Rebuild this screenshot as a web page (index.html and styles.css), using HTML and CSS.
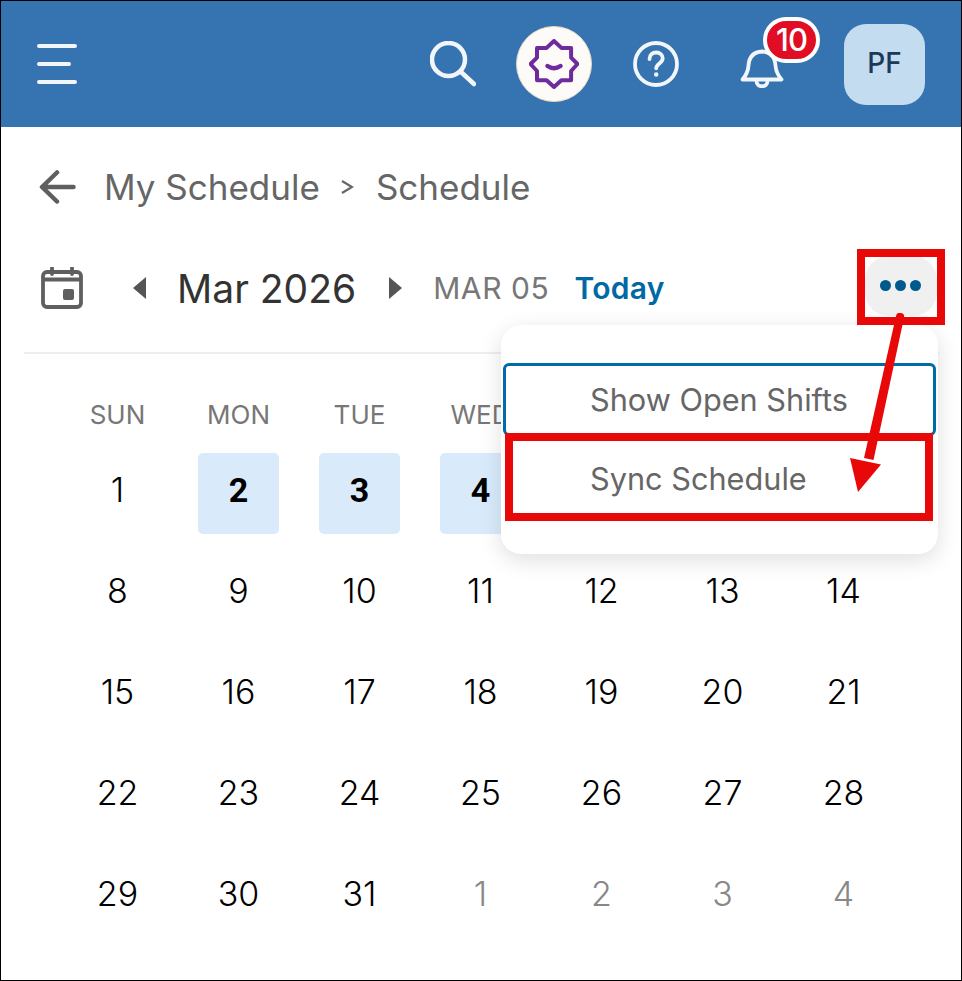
FILE: index.html
```html
<!DOCTYPE html>
<html lang="en">
<head>
<meta charset="UTF-8">
<meta name="viewport" content="width=device-width, initial-scale=1.0">
<title>My Schedule</title>
<link rel="stylesheet" href="styles.css">
</head>
<body>
<div class="screen">

  <!-- top bar -->
  <header class="topbar">
    <div class="burger"><span></span><span class="short"></span><span></span></div>
    <div class="top-actions">
      <svg class="ico-search" width="46" height="46" viewBox="0 0 46 46" fill="none" stroke="#f2f6fa" stroke-width="4.5" stroke-linecap="round"><circle cx="18.5" cy="18.5" r="16.5"/><path d="M31 31l13 12"/></svg>
      <div class="logo-round">
        <svg width="50" height="50" viewBox="0 0 50 50" fill="none" stroke="#6f2a9c" stroke-width="4" stroke-linejoin="round" stroke-linecap="round"><path d="M25 2l7.400 6.900h9.700v9.700l6.400 6.400-6.400 7v9.300h-9.700L25 48l-7.400-6.700H8V32l-6.500-7L8 18.600V8.900h9.600z"/><path d="M18.500 27c4.500 3 8.500 3 13 0" stroke-width="4.500"/></svg>
      </div>
      <svg class="ico-help" width="46" height="46" viewBox="0 0 46 46" fill="none" stroke="#f2f6fa" stroke-width="3.800" stroke-linecap="round"><circle cx="23" cy="23" r="21"/><path d="M16.500 18c0-4 3-6.500 6.700-6.500s6.500 2.500 6.500 5.800c0 5-6.500 5.200-6.500 10"/><circle cx="23.200" cy="33.500" r="1.500" fill="#f2f6fa" stroke-width="1.500"/></svg>
      <div class="bell-wrap">
        <svg width="46" height="44" viewBox="0 0 46 44" fill="none" stroke="#f2f6fa" stroke-width="3.800" stroke-linejoin="round" stroke-linecap="round"><path d="M2.500 35.500c3.500-4 5.500-7 6-14 .6-8 5-13.500 13.500-14 8.500.5 13 6 13.500 14 .5 7 2.500 10 6 14z"/><path d="M16.500 37c0 7 11 7 11 0"/></svg>
        <span class="badge">10</span>
      </div>
      <div class="avatar">PF</div>
    </div>
  </header>

  <!-- breadcrumb -->
  <nav class="crumbs">
    <svg width="38" height="36" viewBox="0 0 38 36" fill="none" stroke="#5f5f5f" stroke-width="4.500" stroke-linecap="round" stroke-linejoin="round"><path d="M18 3.500L3 18l15 14.500M3.500 18h31"/></svg>
    <span class="crumb-text">My Schedule</span>
    <svg class="crumb-sep" width="14" height="16" viewBox="0 0 14 16" fill="none" stroke="#666" stroke-width="2.200"><path d="M2 2l10 6-10 6"/></svg>
    <span class="crumb-text">Schedule</span>
  </nav>

  <!-- month row -->
  <div class="month-row">
    <svg class="cal-ico" width="42" height="42" viewBox="0 0 42 42" fill="none" stroke="#5f5f5f" stroke-width="3.800"><rect x="2" y="5" width="38" height="35" rx="4"/><path d="M2 12.500h38"/><path d="M11 1v6M31 1v6" stroke-linecap="round"/><rect x="22" y="22" width="11" height="11" rx="2" fill="#5f5f5f" stroke="none"/></svg>
    <span class="caret caret-left"></span>
    <span class="month-name">Mar 2026</span>
    <span class="caret caret-right"></span>
    <span class="cur-day">MAR 05</span>
    <span class="today-link">Today</span>
    <div class="more-btn"><i></i><i></i><i></i></div>
  </div>
  <div class="divider"></div>

  <!-- calendar -->
  <div class="weekdays">
    <span>SUN</span><span>MON</span><span>TUE</span><span>WED</span>
  </div>
  <div class="days">
    <span>1</span><span class="hl">2</span><span class="hl">3</span><span class="hl">4</span><span></span><span></span><span></span>
    <span>8</span><span>9</span><span>10</span><span>11</span><span>12</span><span>13</span><span>14</span>
    <span>15</span><span>16</span><span>17</span><span>18</span><span>19</span><span>20</span><span>21</span>
    <span>22</span><span>23</span><span>24</span><span>25</span><span>26</span><span>27</span><span>28</span>
    <span>29</span><span>30</span><span>31</span><span class="off">1</span><span class="off">2</span><span class="off">3</span><span class="off">4</span>
  </div>

  <!-- dropdown -->
  <div class="menu">
    <div class="menu-item focused">Show Open Shifts</div>
    <div class="menu-item">Sync Schedule</div>
  </div>

  <!-- red annotations -->
  <div class="mark mark-more"></div>
  <div class="mark mark-sync"></div>
  <svg class="mark-arrow" width="60" height="190" viewBox="0 0 60 190" fill="#e90808"><path d="M50 3a4 4 0 0 1 8 1.800L27.500 147l-9.500-2z"/><path d="M4 145l31 6.500-23 27.500z"/></svg>
</div>
</body>
</html>
```

FILE: styles.css
```css
* {
  box-sizing: border-box;
}

body {
  margin: 0;
  background: #fff;
  font-family: "Inter", "Liberation Sans", sans-serif;
}

.screen {
  position: relative;
  width: 962px;
  height: 981px;
  border: 1px solid #000;
  overflow: hidden;
  background: #fff;
}

/* top bar */
.topbar {
  display: flex;
  align-items: center;
  justify-content: space-between;
  height: 126px;
  padding: 0 36px;
  background: #3574b0;
}

.burger {
  display: flex;
  flex-direction: column;
  gap: 14px;
  width: 40px;
}

.burger span {
  height: 4px;
  border-radius: 2px;
  background: #f2f6fa;
}

.burger .short {
  width: 34px;
}

.top-actions {
  display: flex;
  align-items: center;
}

.ico-search {
  margin-right: 40px;
}

.logo-round {
  display: flex;
  align-items: center;
  justify-content: center;
  width: 76px;
  height: 76px;
  margin-right: 41px;
  border: 1px solid #e6d6c4;
  border-radius: 50%;
  background: #fdfbf8;
}

.bell-wrap {
  position: relative;
  width: 46px;
  height: 44px;
  margin: 4px 0 0 61px;
}

.bell-wrap svg {
  display: block;
}

.badge {
  position: absolute;
  left: 23px;
  top: -27px;
  min-width: 57px;
  height: 46px;
  border: 4px solid #fff;
  border-radius: 23px;
  background: #e00d24;
  color: #fff;
  font-size: 31px;
  font-weight: 500;
  letter-spacing: -1px;
  line-height: 37px;
  text-align: center;
}

.avatar {
  width: 81px;
  height: 81px;
  margin-left: 58px;
  border-radius: 22px;
  background: #c3dcf0;
  color: #1b3a57;
  font-size: 28px;
  font-weight: 500;
  line-height: 79px;
  text-align: center;
}

/* breadcrumb */
.crumbs {
  display: flex;
  align-items: center;
  height: 36px;
  margin-top: 42px;
  padding-left: 38px;
  color: #666;
  font-size: 35px;
  line-height: 34px;
}

.crumb-text {
  margin-left: 27px;
}

.crumb-sep {
  margin-left: 20px;
  margin-right: -5px;
}

/* month row */
.month-row {
  display: flex;
  align-items: center;
  height: 60px;
  margin-top: 53px;
  padding-left: 40px;
}

.cal-ico {
  margin-right: 50px;
}

.caret {
  width: 0;
  height: 0;
  border-top: 11px solid transparent;
  border-bottom: 11px solid transparent;
}

.caret-left {
  border-right: 13px solid #555;
}

.caret-right {
  border-left: 13px solid #555;
}

.month-name {
  margin: 0 33px 0 31px;
  color: #333;
  font-size: 39px;
}

.cur-day {
  margin-left: 31px;
  color: #777;
  font-size: 30px;
  letter-spacing: 0.6px;
}

.today-link {
  margin-left: 25px;
  color: #0069a4;
  font-size: 30px;
  font-weight: 600;
  letter-spacing: 0.3px;
}

.more-btn {
  display: flex;
  align-items: center;
  justify-content: center;
  gap: 4px;
  width: 72px;
  height: 60px;
  margin: 0 24px 4px auto;
  padding: 0 2px 2px 0;
  border-radius: 24px;
  background: #f0f0f0;
}

.more-btn i {
  width: 11px;
  height: 11px;
  border-radius: 50%;
  background: #00598c;
}

.divider {
  height: 2px;
  margin: 34px 22px 0 23px;
  background: #eee;
}

/* calendar */
.weekdays,
.days {
  display: grid;
  grid-template-columns: repeat(7, 121px);
  margin-left: 56px;
}

.weekdays {
  margin-top: 43px;
  color: #777;
  font-size: 26px;
  line-height: 36px;
  text-align: center;
}

.days {
  grid-auto-rows: 101px;
  margin-top: 20px;
  font-size: 34px;
  font-weight: 300;
  color: #000;
}

.days span {
  display: flex;
  align-items: center;
  justify-content: center;
  width: 81px;
  height: 81px;
  margin: 0 20px;
  padding-bottom: 8px;
}

.days .hl {
  border-radius: 5px;
  background: #d9ebfb;
  color: #000;
  font-family: "Roboto", sans-serif;
  font-weight: 700;
}

.days .off {
  color: #888;
}

/* dropdown */
.menu {
  position: absolute;
  left: 500px;
  top: 324px;
  width: 437px;
  height: 229px;
  padding: 38px 2px 0;
  border-radius: 20px;
  background: #fff;
  box-shadow: 0 6px 22px rgba(0, 0, 0, 0.13);
}

.menu-item {
  height: 76px;
  padding-left: 87px;
  color: #666;
  font-size: 30.7px;
  line-height: 74px;
}

.menu-item.focused {
  height: 73px;
  margin-bottom: 6px;
  border: 3px solid #006ba6;
  border-radius: 6px;
  line-height: 68px;
  padding-left: 84px;
}

/* red annotations */
.mark {
  position: absolute;
  border: 8px solid #e90808;
}

.mark-more {
  left: 856px;
  top: 248px;
  width: 88px;
  height: 76px;
}

.mark-sync {
  left: 504px;
  top: 432px;
  width: 428px;
  height: 88px;
}

.mark-arrow {
  position: absolute;
  left: 845px;
  top: 312px;
}
```
